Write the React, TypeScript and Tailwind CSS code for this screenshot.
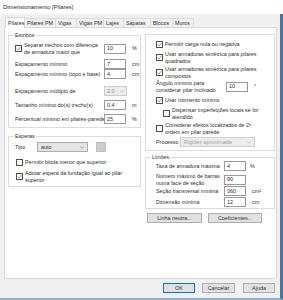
import React from 'react';

const Check: React.FC<{ on?: boolean }> = ({ on }) => (
  <span className="w-[7px] h-[7px] shrink-0 border border-[#505050] bg-white flex items-center justify-center">
    {on && (
      <svg viewBox="0 0 6 6" className="w-[5px] h-[5px]">
        <path d="M0.6 3.1 L2.3 4.8 L5.5 1.0" stroke="#444" strokeWidth="0.7" fill="none" />
      </svg>
    )}
  </span>
);

const Chevron: React.FC<{ color?: string }> = ({ color = '#666' }) => (
  <svg viewBox="0 0 6 4" className="w-[4px] h-[3px]">
    <path d="M0.5 0.8 L3 3.2 L5.5 0.8" stroke={color} strokeWidth="0.8" fill="none" />
  </svg>
);

const Input: React.FC<{ v: string; w?: string }> = ({ v, w = 'w-[22px]' }) => (
  <span className={`${w} h-[10px] shrink-0 border border-[#9a9a9a] bg-white flex items-center pl-[2px]`}>{v}</span>
);

const GroupBox: React.FC<{ title?: string; className?: string; children: React.ReactNode }> = ({
  title,
  className = '',
  children,
}) => (
  <div className={`relative border border-[#dcdcdc] ${className}`}>
    {title && <span className="absolute -top-[4px] left-[5px] bg-white px-[1px] leading-[6.5px]">{title}</span>}
    {children}
  </div>
);

const tabs: [string, string][] = [
  ['Pilares', 'w-[20px]'],
  ['Pilares PM', 'w-[31px]'],
  ['Vigas', 'w-[21px]'],
  ['Vigas PM', 'w-[27px]'],
  ['Lajes', 'w-[20px]'],
  ['Sapatas', 'w-[27px]'],
  ['Blocos', 'w-[22px]'],
  ['Muros', 'w-[21px]'],
];

export default function App() {
  return (
    <div className="w-[283px] h-[300px] bg-[#f0f0f0] flex flex-col overflow-hidden font-['Liberation_Sans',Arial,sans-serif] text-[5.4px] leading-[6.5px] text-[#2e2e2e]">
      <div className="h-[14px] shrink-0 bg-white flex items-center pl-[3px] text-[5.9px]">Dimensionamento [Pilares]</div>

      <div className="flex-1 flex flex-col border-r-[3px] border-r-[#3a78b5] border-b-[2px] border-b-[#8fb0d0]">
        {/* tabs */}
        <div className="flex items-end h-[10px] mt-[3px] pl-[5px] whitespace-nowrap">
          {tabs.map(([t, w], i) =>
            i === 0 ? (
              <div
                key={t}
                className={`${w} h-[11px] -mb-px relative z-10 bg-white border border-b-0 border-[#d9d9d9] flex items-center pl-[2px]`}
              >
                {t}
              </div>
            ) : (
              <div
                key={t}
                className={`${w} h-[9px] border border-b-0 border-l-0 border-[#dcdcdc] flex items-center pl-[2px]`}
              >
                {t}
              </div>
            )
          )}
        </div>

        {/* panel */}
        <div className="ml-[4px] w-[273px] h-[252px] shrink-0 bg-white border border-[#d9d9d9] flex gap-[4px] pl-[3px]">
          {/* left column */}
          <div className="w-[133px] flex flex-col">
            <GroupBox title="Estribos" className="mt-[7px] pt-[6px] pb-[3px] pl-[6px]">
              <div className="flex items-center h-[13px]">
                <div className="w-[89px] flex items-center gap-[2px]">
                  <Check on />
                  <span>
                    Separar trechos com diferença
                    <br />
                    de armadura maior que
                  </span>
                </div>
                <Input v="10" />
                <span className="ml-[6px]">%</span>
              </div>
              <div className="flex items-center h-[10px] mt-[4px]">
                <span className="w-[89px]">Espaçamento mínimo</span>
                <Input v="7" />
                <span className="ml-[6px]">cm</span>
              </div>
              <div className="flex items-center h-[10px]">
                <span className="w-[89px]">Espaçamento mínimo (topo e base)</span>
                <Input v="4" />
                <span className="ml-[6px]">cm</span>
              </div>
              <div className="flex items-center h-[10px] mt-[7px]">
                <span className="w-[89px]">Espaçamento múltiplo de</span>
                <span className="w-[23px] h-[10px] border border-[#cccccc] bg-[#ececec] flex items-center justify-between px-[2px] text-[#8a8a8a]">
                  2.0
                  <Chevron color="#9a9a9a" />
                </span>
              </div>
              <div className="flex items-center h-[10px] mt-[4px]">
                <span className="w-[89px]">Tamanho mínimo do(s) trecho(s)</span>
                <Input v="0.4" />
                <span className="ml-[6px]">m</span>
              </div>
              <div className="flex items-center h-[10px] mt-[4px]">
                <span className="w-[89px] whitespace-nowrap">Percentual mínimo em pilares-parede</span>
                <Input v="25" />
                <span className="ml-[6px]">%</span>
              </div>
            </GroupBox>

            <GroupBox title="Esperas" className="mt-[8px] pt-[5px] pb-[3px] pl-[6px]">
              <div className="flex items-center h-[10px]">
                <span className="w-[22px]">Tipo</span>
                <span className="w-[51px] h-[10px] border border-[#adadad] bg-[#e5e5e5] flex items-center justify-between px-[3px]">
                  auto
                  <Chevron />
                </span>
                <span className="ml-[8px] w-[10px] h-[10px] bg-[#cccccc] border border-[#bfbfbf]" />
              </div>
              <div className="flex items-center gap-[2px] h-[7px] mt-[7px] pl-[1px]">
                <Check />
                <span>Permitir bitola menor que superior</span>
              </div>
              <div className="flex items-center gap-[2px] h-[13px] mt-[4px] pl-[1px]">
                <Check on />
                <span>
                  Adotar espera da fundação igual ao pilar
                  <br />
                  superior
                </span>
              </div>
            </GroupBox>
          </div>

          {/* right column */}
          <div className="w-[130px] flex flex-col">
            <GroupBox className="mt-[6px] pt-[6px] pb-[3px] pl-[10px]">
              <div className="flex items-center gap-[2px] h-[7px]">
                <Check on />
                <span>Permitir carga nula ou negativa</span>
              </div>
              <div className="flex items-center gap-[2px] h-[13px] mt-[3px]">
                <Check on />
                <span>
                  Usar armaduras simétrica para pilares
                  <br />
                  quadrados
                </span>
              </div>
              <div className="flex items-center gap-[2px] h-[13px] mt-[2px]">
                <Check on />
                <span>
                  Usar armaduras simétrica para pilares
                  <br />
                  compostos
                </span>
              </div>
              <div className="flex items-center h-[13px] mt-[1px]">
                <span className="w-[70px]">
                  Ângulo mínimo para
                  <br />
                  considerar pilar inclinado
                </span>
                <Input v="10" />
                <span className="ml-[6px]">°</span>
              </div>
              <div className="flex items-center gap-[2px] h-[7px] mt-[4px]">
                <Check on />
                <span>Usar momento mínimo</span>
              </div>
              <div className="flex items-center gap-[2px] h-[13px] mt-[3px] pl-[7px]">
                <Check />
                <span>
                  Dispensar imperfeições locais se for
                  <br />
                  atendido
                </span>
              </div>
              <div className="flex items-center gap-[2px] h-[13px] mt-[2px]">
                <Check />
                <span>
                  Considerar efeitos localizados de 2ª
                  <br />
                  ordem em pilar parede
                </span>
              </div>
              <div className="flex items-center h-[10px] mt-[2px]">
                <span className="w-[24px]">Processo</span>
                <span className="w-[75px] h-[10px] border border-[#d0d0d0] bg-[#ececec] flex items-center justify-between px-[3px] text-[#a0a0a0]">
                  Rigidez aproximada
                  <Chevron color="#a8a8a8" />
                </span>
              </div>
            </GroupBox>

            <GroupBox title="Limites" className="mt-[6px] pt-[3px] pb-[1px] pl-[10px]">
              <div className="flex items-center h-[10px]">
                <span className="w-[68px]">Taxa de armadura máxima</span>
                <Input v="4" />
                <span className="ml-[4px]">%</span>
              </div>
              <div className="flex items-center h-[13px] mt-[2px]">
                <span className="w-[68px]">
                  Número máximo de barras
                  <br />
                  numa face de seção
                </span>
                <Input v="90" />
              </div>
              <div className="flex items-center h-[10px]">
                <span className="w-[68px]">Seção transversal mínima</span>
                <Input v="360" />
                <span className="ml-[6px]">cm²</span>
              </div>
              <div className="flex items-center h-[10px] mt-[1px]">
                <span className="w-[68px]">Dimensão mínima</span>
                <Input v="12" />
                <span className="ml-[6px]">cm</span>
              </div>
            </GroupBox>

            <div className="flex gap-[6px] mt-[4px] pl-[2px]">
              <span className="w-[55px] h-[10px] bg-[#e1e1e1] border border-[#adadad] flex items-center justify-center">
                Linha neutra...
              </span>
              <span className="w-[54px] h-[10px] bg-[#e1e1e1] border border-[#adadad] flex items-center justify-center">
                Coeficientes...
              </span>
            </div>
          </div>
        </div>

        {/* dialog buttons */}
        <div className="flex justify-end mt-[4px] pr-[5px]">
          <span className="w-[32px] h-[10px] bg-[#e1e1e1] border border-[#0078d7] flex items-center justify-center">OK</span>
          <span className="w-[33px] h-[10px] ml-[7px] bg-[#e1e1e1] border border-[#adadad] flex items-center justify-center">
            Cancelar
          </span>
          <span className="w-[32px] h-[10px] ml-[8px] bg-[#e1e1e1] border border-[#adadad] flex items-center justify-center">
            Ajuda
          </span>
        </div>
      </div>
    </div>
  );
}
